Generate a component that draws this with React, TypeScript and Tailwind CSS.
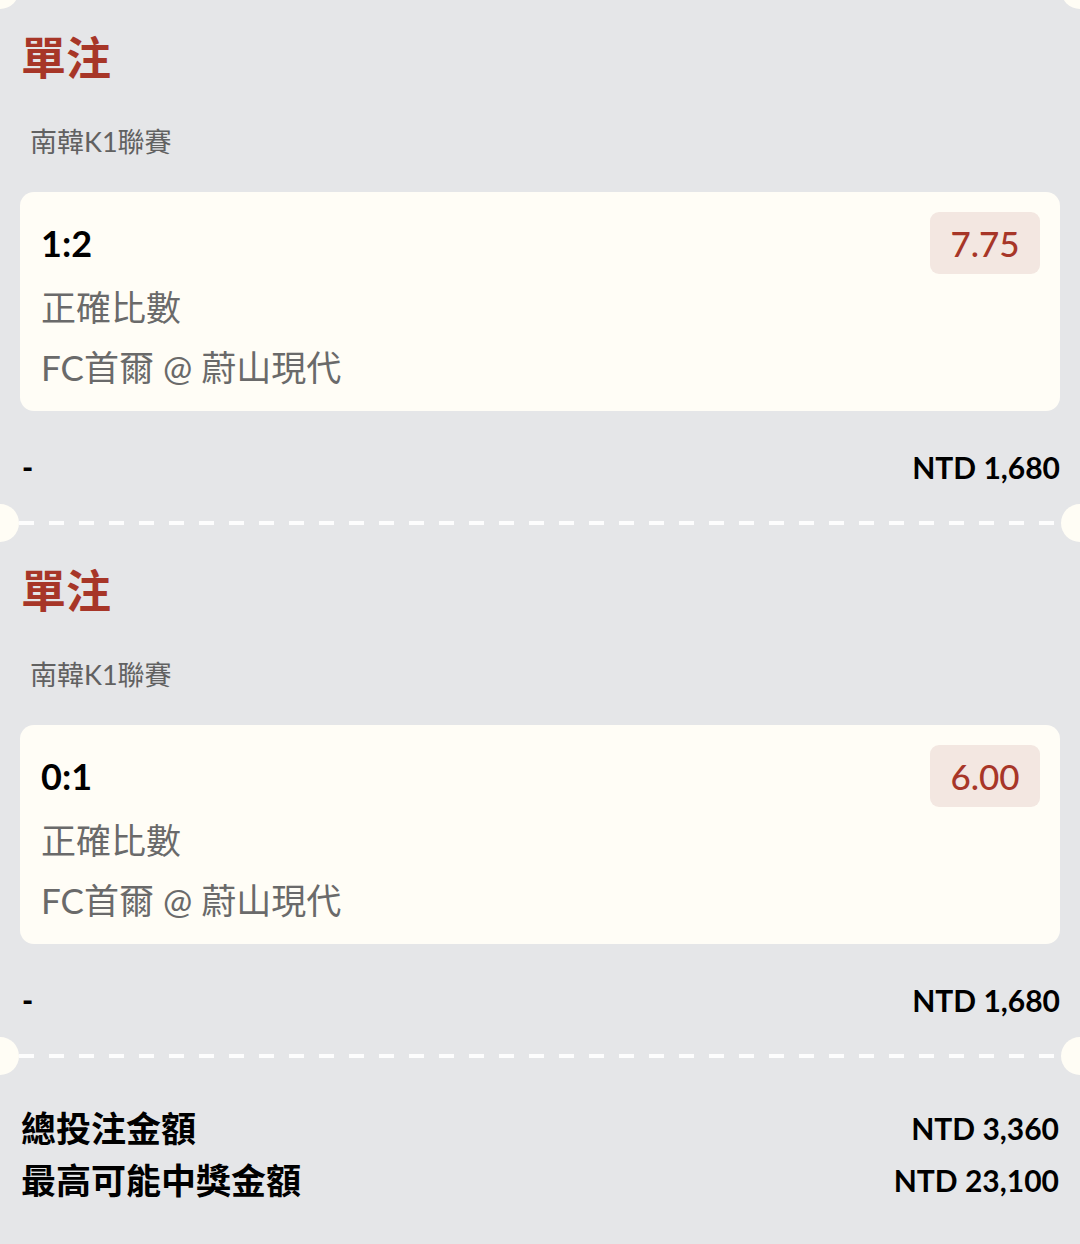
const FONT = { fontFamily: 'Lato, "Noto Sans CJK TC", sans-serif' };

interface Bet {
  score: string;
  odds: string;
  market: string;
  match: string;
  stake: string;
}

const bets: Bet[] = [
  { score: '1:2', odds: '7.75', market: '正確比數', match: 'FC首爾 @ 蔚山現代', stake: 'NTD 1,680' },
  { score: '0:1', odds: '6.00', market: '正確比數', match: 'FC首爾 @ 蔚山現代', stake: 'NTD 1,680' },
];

function Divider() {
  return (
    <div className="flex items-center h-[38px] -mx-[19px]">
      <div className="w-[38px] h-[38px] rounded-full bg-[#fffdf5] shrink-0" />
      <div className="flex-1 h-[4px] bg-[repeating-linear-gradient(90deg,#fdfdfd_0_15px,transparent_15px_30px)]" />
      <div className="w-[38px] h-[38px] rounded-full bg-[#fffdf5] shrink-0" />
    </div>
  );
}

function BetSection({ bet }: { bet: Bet }) {
  return (
    <div className="px-[20px] pt-[27px] pb-[17px]">
      <h2 className="text-[45px] leading-[44px] font-bold text-[#a73628] pl-[1px]">單注</h2>
      <p className="mt-[47px] text-[27px] leading-[30px] text-[#616161] pl-[10px]">南韓K1聯賽</p>

      {/* Selection card */}
      <div className="mt-[35px] bg-[#fffdf6] rounded-[14px] pl-[21px] pr-[20px] pt-[20px] pb-[14px]">
        <div className="flex justify-between items-center h-[62px]">
          <span className="text-[36px] font-bold text-black">{bet.score}</span>
          <span className="h-[62px] w-[110px] rounded-[9px] bg-[#f3e7e1] text-[#a73628] text-[35px] font-medium flex items-center justify-center">
            {bet.odds}
          </span>
        </div>
        <p className="mt-[3px] text-[35px] leading-[60px] text-[#6a6a6a]">{bet.market}</p>
        <p className="text-[35px] leading-[60px] text-[#6a6a6a]">{bet.match}</p>
      </div>

      <div className="mt-[36px] h-[40px] flex justify-between items-center text-[30px] font-bold text-black">
        <span className="pl-[2px] font-black">-</span>
        <span>{bet.stake}</span>
      </div>
    </div>
  );
}

export default function App() {
  return (
    <div className="w-[1080px] h-[1244px] bg-[#e5e6e8] overflow-hidden" style={FONT}>
      <div className="-mt-[29px]">
        <Divider />
      </div>
      {bets.map((bet, i) => (
        <div key={i}>
          <BetSection bet={bet} />
          <Divider />
        </div>
      ))}

      {/* Totals */}
      <div className="px-[21px] mt-[27px] text-black font-bold">
        <div className="flex justify-between items-center h-[52px]">
          <span className="text-[35px]">總投注金額</span>
          <span className="text-[30px]">NTD 3,360</span>
        </div>
        <div className="flex justify-between items-center h-[52px]">
          <span className="text-[35px]">最高可能中獎金額</span>
          <span className="text-[30px]">NTD 23,100</span>
        </div>
      </div>
    </div>
  );
}
